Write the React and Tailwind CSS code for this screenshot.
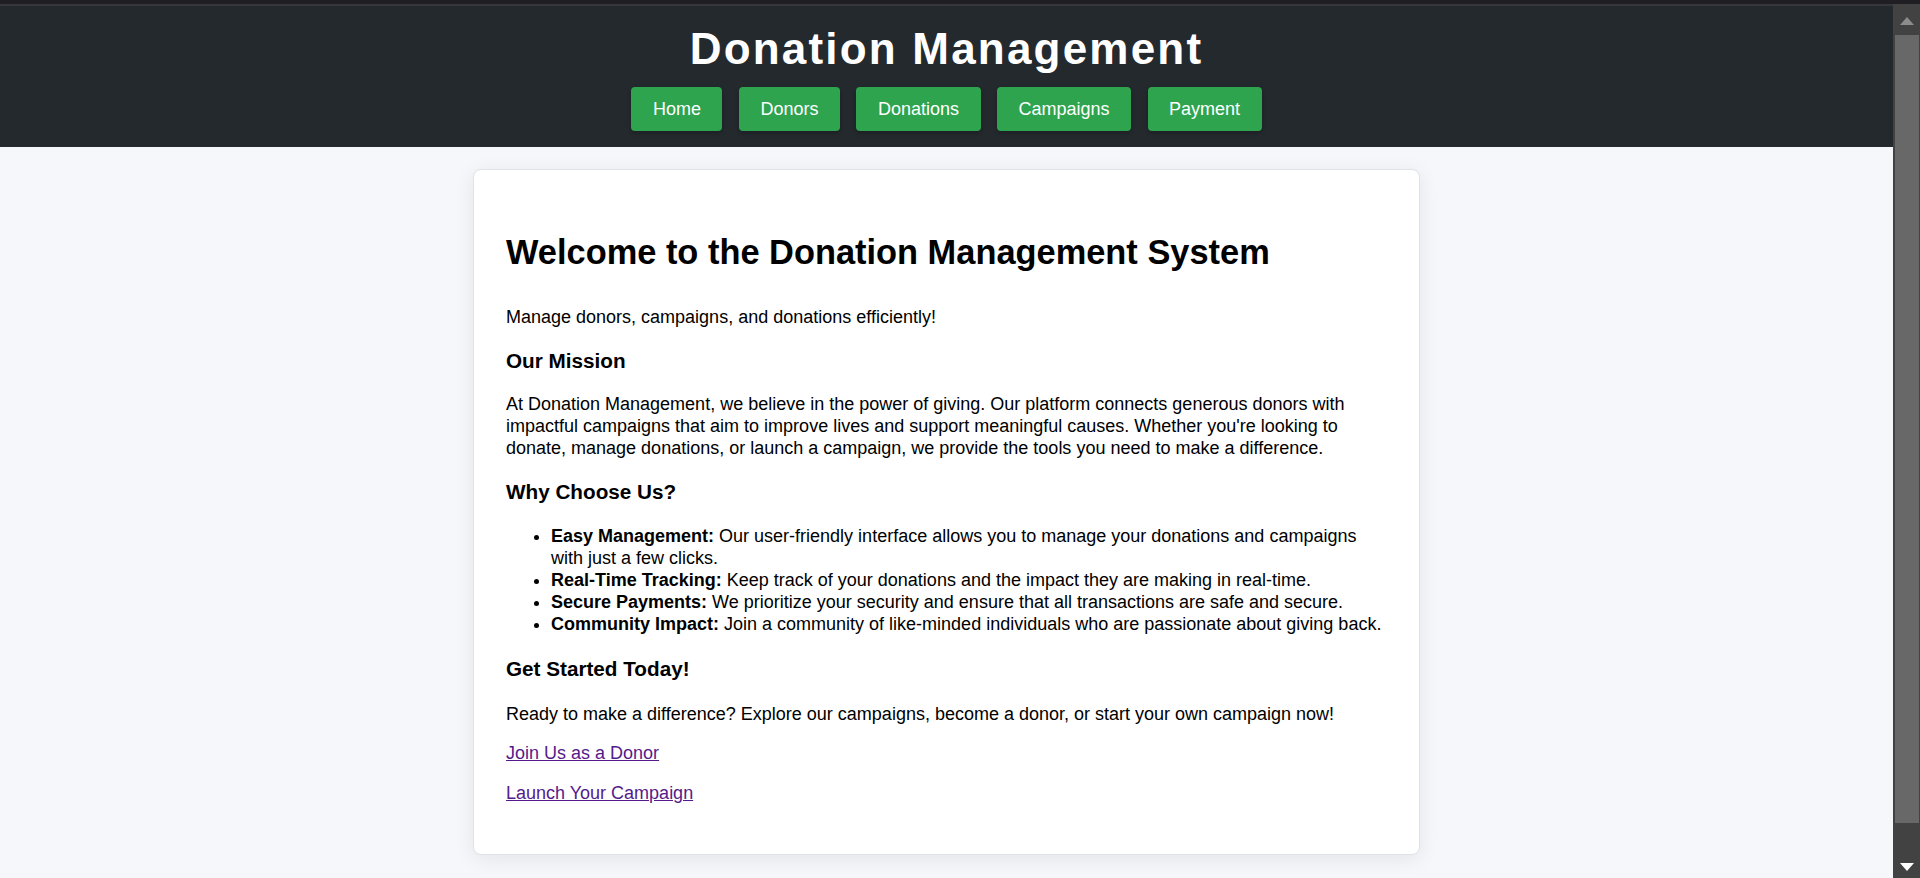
import React from 'react';

const navItems = ['Home', 'Donors', 'Donations', 'Campaigns', 'Payment'];

const features = [
  { title: 'Easy Management:', text: 'Our user-friendly interface allows you to manage your donations and campaigns with just a few clicks.' },
  { title: 'Real-Time Tracking:', text: 'Keep track of your donations and the impact they are making in real-time.' },
  { title: 'Secure Payments:', text: 'We prioritize your security and ensure that all transactions are safe and secure.' },
  { title: 'Community Impact:', text: 'Join a community of like-minded individuals who are passionate about giving back.' },
];

// fake browser scrollbar on the right edge
const Scrollbar = () => (
  <div className="w-[27px] shrink-0 bg-[#424242] flex flex-col">
    <div className="h-[31px] flex items-start justify-center pt-[13px]">
      <svg width="14" height="8" viewBox="0 0 14 8">
        <polygon points="7,0 14,8 0,8" fill="#8c8c8c" />
      </svg>
    </div>
    <div className="h-[788px] ml-[2px] mr-[1px] bg-[#686868]" />
    <div className="flex-1" />
    <div className="h-[28px] flex items-start justify-center pt-[13px]">
      <svg width="14" height="8" viewBox="0 0 14 8">
        <polygon points="0,0 14,0 7,8" fill="#ffffff" />
      </svg>
    </div>
  </div>
);

const App = () => {
  return (
    <div className="h-[878px] overflow-hidden flex flex-col bg-[#1f1e23] font-['Liberation_Sans',Arial,sans-serif] text-black">
      <div className="h-[4px] shrink-0" />
      <div className="flex flex-1 min-h-0">
        <div className="flex-1 min-w-0 bg-[#f5f7fa] overflow-hidden">
          <header className="border-t-2 border-[#36363b] bg-[#24292e] pt-[18px] pb-[16px] text-center">
            <h1 className="text-[44px] leading-[50px] font-bold tracking-[2.2px] text-white">Donation Management</h1>
            <nav className="mt-[13px] flex justify-center gap-[16.5px]">
              {navItems.map(item => (
                <a
                  key={item}
                  href="#"
                  className="h-[44px] px-[21.5px] flex items-center rounded-[4px] bg-[#2ea44f] text-white text-[18px] shadow-[0_2px_4px_rgba(0,0,0,0.25)]"
                >
                  {item}
                </a>
              ))}
            </nav>
          </header>

          <main className="pt-[22px]">
            <div className="mx-auto w-[947px] bg-white border border-[#dfe2e6] rounded-[8px] shadow-[0_4px_20px_rgba(0,0,0,0.08)] px-[32px] pt-[32px] pb-[50px] text-[18px] leading-[22px]">
              <h2 className="mt-[30px] text-[34.4px] leading-[40px] font-bold">Welcome to the Donation Management System</h2>
              <p className="mt-[34px]">Manage donors, campaigns, and donations efficiently!</p>

              <h3 className="mt-[20px] text-[20.7px] leading-[26px] font-bold">Our Mission</h3>
              <p className="mt-[19px]">
                At Donation Management, we believe in the power of giving. Our platform connects generous donors with impactful campaigns that aim to improve lives and support meaningful causes. Whether you're looking to donate, manage donations, or launch a campaign, we provide the tools you need to make a difference.
              </p>

              <h3 className="mt-[20px] text-[20.7px] leading-[26px] font-bold">Why Choose Us?</h3>
              <ul className="mt-[20px] list-disc pl-[45px]">
                {features.map(f => (
                  <li key={f.title}>
                    <strong className="font-bold">{f.title}</strong> {f.text}
                  </li>
                ))}
              </ul>

              <h3 className="mt-[21px] text-[20.7px] leading-[26px] font-bold">Get Started Today!</h3>
              <p className="mt-[21px]">Ready to make a difference? Explore our campaigns, become a donor, or start your own campaign now!</p>
              <p className="mt-[17px]"><a href="#" className="text-[#551a8b] underline">Join Us as a Donor</a></p>
              <p className="mt-[18px]"><a href="#" className="text-[#551a8b] underline">Launch Your Campaign</a></p>
            </div>
          </main>
        </div>
        <Scrollbar />
      </div>
    </div>
  );
};

export default App;
